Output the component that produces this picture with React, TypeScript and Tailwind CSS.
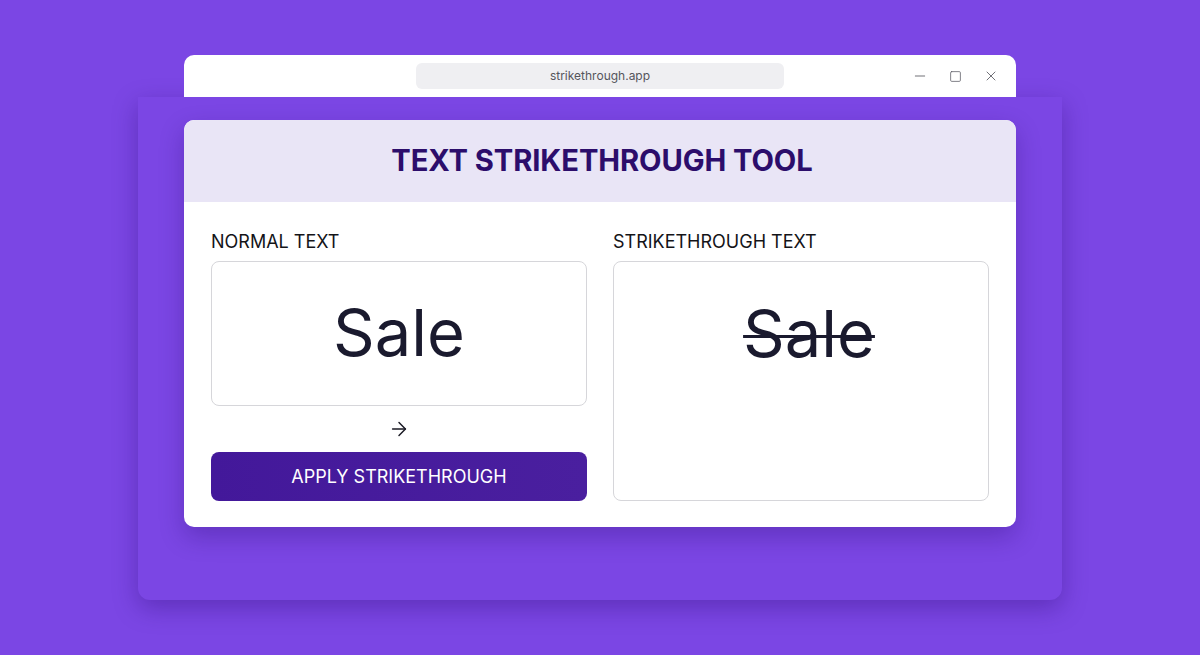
import { ArrowRight, Minus, Square, X } from "lucide-react";

export default function App() {
  return (
    <div
      className="min-h-screen w-full bg-[#7b46e4] pt-[55px]"
      style={{ fontFamily: "Inter, 'Noto Sans', sans-serif" }}
    >
      {/* Browser title bar */}
      <div className="relative z-10 mx-auto grid h-[42px] w-[832px] grid-cols-[1fr_368px_1fr] items-center rounded-t-[10px] bg-white">
        <div />
        <div className="flex h-[26px] items-center justify-center rounded-[6px] bg-[#efeff2] text-[12px] text-[#55555c]">
          strikethrough.app
        </div>
        <div className="flex items-center justify-end gap-[21px] pr-[17px] text-[#5a5a63]">
          <Minus className="size-[16px]" strokeWidth={1.3} />
          <Square className="size-[13px]" strokeWidth={1.4} />
          <X className="size-[16px]" strokeWidth={1.3} />
        </div>
      </div>

      {/* Window body */}
      <div className="mx-auto h-[503px] w-[924px] rounded-b-[12px] bg-[#7b46e4] px-[46px] pt-[23px] shadow-[0_8px_24px_rgba(40,10,110,0.35)]">
        <div className="overflow-hidden rounded-[10px] bg-white shadow-[0_10px_24px_rgba(40,10,110,0.3)]">
          <div className="flex h-[82px] items-center justify-center bg-[#e9e5f6] pl-[4px]">
            <h1 className="text-[29.2px] font-bold tracking-[-0.1px] text-[#2c0d6b]">
              TEXT STRIKETHROUGH TOOL
            </h1>
          </div>

          <div className="grid grid-cols-2 gap-[26px] px-[27px] pt-[28px] pb-[26px]">
            {/* Input column */}
            <div className="flex flex-col">
              <div className="mb-[7px] text-[18px] leading-[24px] text-[#141418]">NORMAL TEXT</div>
              <div className="flex h-[145px] items-center justify-center rounded-[8px] border border-[#d6d6da] bg-white">
                <span className="pb-[2px] text-[65px] leading-none text-[#1a1a2e]">Sale</span>
              </div>
              <div className="flex h-[46px] items-center justify-center text-[#1a1a24]">
                <ArrowRight className="size-[22px]" strokeWidth={1.6} />
              </div>
              <button className="h-[49px] rounded-[8px] bg-gradient-to-r from-[#43189a] to-[#4a1f9f] text-[18px] text-white">
                APPLY STRIKETHROUGH
              </button>
            </div>

            {/* Output column */}
            <div className="flex flex-col">
              <div className="mb-[7px] text-[18px] leading-[24px] text-[#141418]">STRIKETHROUGH TEXT</div>
              <div className="flex h-[240px] flex-col items-center rounded-[8px] border border-[#d6d6da] bg-white pl-[16px]">
                <div className="flex h-[145px] items-center justify-center">
                  <span className="pb-[2px] text-[65px] leading-none text-[#1a1a2e] line-through decoration-[3px]">
                    Sale
                  </span>
                </div>
              </div>
            </div>
          </div>
        </div>
      </div>
    </div>
  );
}
